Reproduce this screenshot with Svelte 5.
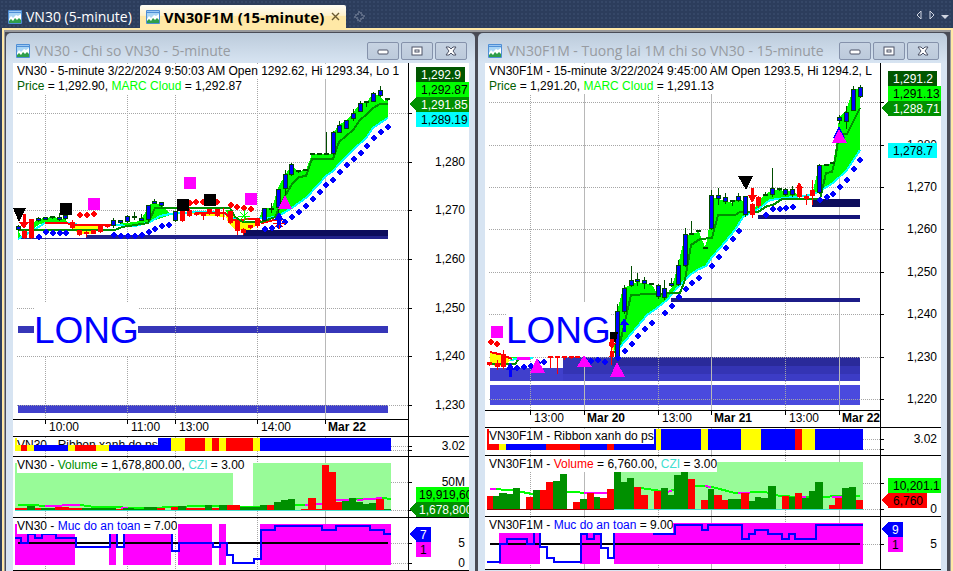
<script>
	const RED = '#ff0000';
	const BLUE = '#0000ff';
	const LIME = '#00ff00';
	const GREEN = '#009000';
	const YELLOW = '#ffff00';
	const PINK = '#ff00ff';
	const DARK = '#004c00';

	// candle: [x, high, low, top, bottom]
	const vn30 = {
		title: 'VN30 - Chi so VN30 - 5-minute',
		symbol: 'VN30',
		head: '5-minute 3/22/2024 9:50:03 AM Open 1292.62, Hi 1293.34, Lo 1',
		price: '1,292.90',
		cloud: '1,292.87',
		x: 13,
		end: 388,
		axis: 409,
		main: { top: 63, h: 373, base: 419 },
		rows: [[113, ''], [162, '1,280'], [210, '1,270'], [259, '1,260'], [308, '1,250'], [356, '1,240'], [405, '1,230']],
		cols: [[45, '10:00'], [127, '11:00'], [175, '13:00'], [257, '14:00'], [325, 'Mar 22', true]],
		zones: [[18, 326, 7, '#3636b8'], [18, 405, 8, '#4040cc']],
		supports: [[18, 238, 1, '#2a2a90'], [86, 235, 4, '#22228a'], [243, 230, 6, '#0d0d5c']],
		clouds: [
			[LIME, '18,230 22,238 18,239'],
			[LIME, '30,226 38,219 52,217 60,218 66,220 68,223 40,224 31,230'],
			[YELLOW, '72,225 98,225 98,230 90,234 78,234 72,228'],
			[LIME, '113,224 127,223 140,221 145,213 148,205 154,203 162,205 171,215 155,220 140,226 113,226'],
			[YELLOW, '189,213 225,213 225,217 200,215'],
			[LIME, '226,210 233,211 236,220 228,216'],
			[YELLOW, '225,214 232,215 240,222 258,221 258,224 250,230 235,230 228,222'],
			[LIME, '260,216 263,208 272,208 278,188 285,175 292,165 295,169 298,171 306,170 312,154 332,154 333,133 339,125 347,120 353,113 360,103 367,102 373,93 380,96 384,101 388,99 388,118 380,123 373,128 366,138 353,150 340,163 333,171 326,176 318,185 307,197 292,208 280,215 270,218 259,218']
		],
		lines: [
			['#00ffff', '18,239 32,231 45,223 66,223 80,225 110,225 135,226 150,222 160,216 170,214 197,212 217,212 225,214 240,222'],
			['#00ffff', '259,218 270,218 280,215 292,208 307,197 318,185 326,176 333,171 340,163 353,150 366,138 373,128 380,123 388,118'],
			[RED, '45,223 66,223 75,225 112,225'],
			[RED, '195,213 225,213 231,220 258,219 262,223 278,219'],
			[GREEN, '18,230 115,230 122,227 148,223 155,208 230,208 235,217 243,222 262,222 275,217 285,196 292,184 299,177 306,176 312,159 333,159 339,142 353,130 360,120 367,114 373,108 380,104 388,104']
		],
		up: [[18, 225, 231, 227, 230], [38, 217, 222, 219, 221], [45, 217, 220, 218, 220], [52, 216, 219, 217, 218], [59, 213, 221, 218, 220], [65, 213, 220, 216, 219], [113, 218, 228, 221, 226], [120, 220, 224, 221, 223], [127, 215, 223, 217, 222], [134, 212, 220, 217, 218], [141, 214, 221, 219, 221], [148, 205, 222, 206, 220], [154, 199, 204, 202, 204], [161, 203, 207, 203, 206], [175, 211, 222, 212, 221], [264, 208, 221, 209, 221], [271, 203, 213, 209, 210], [278, 189, 217, 190, 208], [285, 170, 195, 175, 189], [291, 163, 176, 165, 175], [298, 170, 173, 171, 172], [305, 170, 171, 170, 171], [312, 154, 155, 154, 155], [319, 154, 155, 154, 155], [326, 132, 154, 154, 155], [333, 131, 155, 133, 154], [339, 121, 133, 126, 133], [346, 120, 129, 121, 129], [353, 109, 121, 114, 119], [360, 101, 112, 104, 112], [366, 102, 107, 102, 103], [373, 92, 102, 94, 102], [380, 86, 97, 91, 96], [387, 99, 101, 99, 100]],
		down: [[24, 230, 239, 232, 238], [31, 219, 239, 220, 238], [72, 220, 229, 223, 228], [79, 230, 236, 231, 235], [86, 231, 237, 233, 234], [93, 230, 234, 231, 234], [100, 225, 233, 226, 232], [107, 224, 228, 225, 227], [182, 211, 222, 212, 221], [189, 208, 217, 211, 216], [196, 213, 216, 214, 215], [203, 213, 220, 215, 216], [209, 209, 215, 210, 214], [217, 209, 217, 210, 216], [223, 208, 220, 213, 214], [230, 211, 224, 212, 223], [237, 221, 235, 222, 231], [243, 228, 235, 230, 233], [250, 225, 229, 226, 228], [257, 218, 228, 219, 226]],
		dots: [[39, 237], [46, 232], [53, 233], [60, 233], [66, 233], [114, 235], [121, 236], [128, 236], [135, 236], [142, 235], [149, 232], [155, 229], [162, 226], [169, 225], [265, 229], [272, 228], [279, 226], [285, 222], [292, 217], [299, 212], [306, 206], [313, 199], [320, 192], [326, 185], [333, 180], [340, 172], [347, 165], [354, 159], [361, 153], [367, 146], [374, 138], [381, 132], [388, 127]],
		redDots: [[80, 215], [87, 215], [94, 214], [190, 203], [196, 202], [203, 202], [217, 202], [231, 205], [237, 207], [244, 208], [251, 209]],
		squares: [[60, 203, '#000'], [177, 199, '#000'], [204, 194, '#000'], [88, 198, PINK], [184, 177, PINK], [245, 193, PINK]],
		long: { x: 34, y: 302 },
		shapes: [
			['#000', 'M13 208H26L19 222Z'],
			[RED, 'M23 214H26V222H29L24 229L19 222H23Z'],
			[BLUE, 'M279 212L284 220H281V225H277V220H274Z'],
			[PINK, 'M285 195L292 209H278Z']
		],
		stars: [[244, 216, LIME], [279, 223, RED]],
		badges: [[67, 49, '#005600', '#fff', '1,292.9'], [82, 53, LIME, '#000', '1,292.87'], [97, 53, '#009000', '#fff', '1,291.85', true], [112, 53, '#00ffff', '#000', '1,289.19']],
		ribbon: {
			top: 437, h: 19, y: 438, bh: 13, clip: true, ticks: [446, 450], label: 445,
			stops: [[15, YELLOW], [21, RED], [27, YELLOW], [34, BLUE], [68, YELLOW], [75, RED], [96, YELLOW], [109, BLUE], [171, YELLOW], [185, RED], [205, YELLOW], [212, RED], [219, YELLOW], [226, RED], [253, YELLOW], [260, BLUE], [391, '']]
		},
		volume: {
			top: 457, h: 60, floor: 511, value: '1,678,800.00', color: GREEN,
			fields: [[15, 233], [253, 391]], rim: [[15, 391, '#40e0d0']],
			bars: [[15, 27, 508, 0], [27, 35, 506, 1], [35, 41, 508, 0], [41, 55, 508, 1], [55, 69, 507, 0], [69, 82, 508, 0], [82, 116, 508, 1], [116, 123, 509, 0], [123, 134, 508, 1], [134, 144, 509, 1], [144, 157, 507, 1], [157, 165, 508, 0], [171, 178, 507, 0], [178, 186, 506, 1], [186, 205, 508, 0], [205, 212, 505, 1], [212, 219, 508, 0], [219, 227, 505, 1], [227, 240, 505, 0], [240, 260, 507, 1], [260, 267, 505, 1], [267, 274, 505, 0], [274, 281, 502, 1], [281, 288, 500, 1], [288, 295, 499, 1], [301, 308, 509, 0], [308, 316, 498, 0], [316, 322, 509, 0], [322, 329, 465, 0], [329, 336, 472, 0], [336, 342, 502, 0], [342, 349, 501, 1], [349, 356, 498, 1], [356, 363, 502, 1], [363, 369, 504, 1], [369, 376, 503, 1], [376, 384, 499, 0], [384, 391, 509, 1]],
			lines: [[LIME, '18,505 32,505 45,506 80,505 95,507 150,508 200,506 250,507 300,505 322,504 336,500 370,499 382,498 391,499'], [PINK, '45,506 80,505'], [PINK, '121,508 128,508'], [PINK, '305,505 322,504'], [PINK, '336,500 349,500'], [PINK, '357,500 382,498']],
			ticks: [[482, '50M'], [510, '']],
			badges: [[487, 53, LIME, '#000', '19,919,600'], [502, 53, '#009000', '#fff', '1,678,800', true]], inset: 3
		},
		safety: {
			top: 518, h: 52, y: 524, mid: 543, value: '7.00',
			blocks: [[15, 75], [109, 116], [123, 171], [178, 212], [219, 226], [260, 391]],
			path: '15,538 21,538 21,543 28,543 28,534 35,534 35,538 42,538 42,534 56,534 56,538 76,538 76,547 110,547 110,532 117,532 117,547 124,547 124,532 172,532 172,551 179,551 179,543 213,543 213,547 220,547 220,543 227,543 227,555 233,555 233,563 254,563 254,559 261,559 261,530 275,530 275,526 322,526 322,530 336,530 336,526 370,526 370,530 384,530 384,534 391,534',
			ticks: [[543, '5'], [563, '0']],
			badges: [[527, 15, BLUE, '#fff', '7', true], [542, 15, PINK, '#000', '1']]
		}
	};

	const vn30f = {
		title: 'VN30F1M - Tuong lai 1M chi so VN30 - 15-minute',
		symbol: 'VN30F1M',
		head: '15-minute 3/22/2024 9:45:00 AM Open 1293.5, Hi 1294.2, L',
		price: '1,291.20',
		cloud: '1,291.13',
		x: 485,
		end: 860,
		axis: 881,
		main: { top: 63, h: 364, base: 410 },
		rows: [[102, ''], [145, '1,280'], [187, '1,270'], [229, '1,260'], [272, '1,250'], [314, '1,240'], [357, '1,230'], [399, '1,220']],
		cols: [[530, '13:00'], [584, 'Mar 20', true], [658, '13:00'], [711, 'Mar 21', true], [785, '13:00'], [839, 'Mar 22', true]],
		zones: [[490, 368, 13, '#4040cc'], [563, 357, 18, '#3434b4'], [563, 374, 7, '#3c3cc6'], [612, 357, 9, '#2a2a9a'], [490, 385, 20, '#4a4ade']],
		supports: [[671, 298, 4, '#1c1c88'], [758, 215, 4, '#14147a'], [812, 199, 8, '#0d0d5c']],
		clouds: [
			[YELLOW, '490,353 504,356 510,360 504,366 494,366 490,362'],
			[LIME, '507,357 520,357 518,360 514,358'],
			[YELLOW, '611,350 616,344 618,352'],
			[LIME, '614,352 617,312 623,288 631,285 637,282 652,285 657,293 667,294 672,287 678,265 685,235 692,234 699,232 705,247 708,237 711,197 725,201 733,203 738,197 744,203 747,215 743,217 735,230 720,248 712,257 706,266 697,270 690,275 678,287 667,300 657,308 647,315 637,327 620,347'],
			[LIME, '747,214 755,208 762,197 772,190 792,191 800,196 812,197 783,198 772,200 758,210'],
			[LIME, '812,195 819,165 833,164 837,140 839,118 846,110 853,90 860,88 860,150 847,170 833,183 820,191']
		],
		lines: [
			['#00ffff', '510,360 517,359 533,358'],
			['#00ffff', '614,352 620,347 637,327 647,315 657,308 667,300 678,287 690,275 697,270 706,266 712,257 720,248 735,230 743,217 750,213 760,208 770,200 785,198 812,195 820,191 833,183 847,170 860,150'],
			[RED, '490,352 503,355 512,359'],
			[GREEN, '488,364 515,364 518,360'],
			[GREEN, '610,352 618,352 623,330 631,295 650,294 680,293 685,280 691,245 700,239 712,238 718,215 735,215 740,212 758,212 767,206 773,205 782,199 820,199 826,173 832,172 835,160 839,135 847,134 860,108']
		],
		up: [[617, 304, 358, 312, 357], [624, 285, 314, 289, 312], [631, 266, 287, 281, 286], [637, 273, 286, 280, 282], [644, 277, 289, 281, 284], [651, 284, 285, 284, 285], [658, 284, 299, 286, 297], [664, 280, 300, 289, 298], [671, 278, 287, 284, 286], [678, 260, 286, 266, 285], [685, 228, 267, 235, 266], [691, 221, 235, 234, 235], [698, 231, 232, 231, 232], [705, 248, 249, 248, 249], [711, 190, 230, 196, 229], [718, 188, 205, 196, 199], [725, 193, 204, 198, 202], [732, 200, 206, 201, 202], [738, 193, 202, 197, 201], [745, 197, 217, 197, 215], [765, 192, 196, 195, 196], [772, 168, 197, 189, 195], [779, 188, 191, 189, 190], [785, 188, 196, 190, 195], [792, 186, 197, 190, 195], [819, 164, 194, 166, 193], [826, 165, 166, 165, 166], [832, 163, 164, 163, 164], [839, 115, 124, 118, 121], [846, 106, 129, 113, 122], [853, 86, 111, 90, 111], [860, 85, 98, 88, 97]],
		down: [[489, 362, 366, 363, 365], [497, 360, 370, 364, 367], [503, 350, 369, 355, 367], [550, 356, 368, 357, 358], [557, 356, 374, 357, 358], [564, 356, 360, 357, 358], [571, 356, 359, 357, 358], [577, 356, 358, 357, 358], [611, 339, 365, 352, 357], [752, 203, 218, 205, 215], [758, 196, 208, 198, 206], [799, 184, 198, 188, 197], [806, 194, 205, 197, 199], [812, 180, 205, 191, 196]],
		dots: [[517, 368], [524, 367], [531, 366], [538, 363], [544, 362], [585, 360], [591, 361], [598, 360], [605, 362], [618, 358], [625, 351], [632, 344], [638, 336], [645, 329], [652, 323], [665, 313], [672, 306], [679, 297], [686, 289], [692, 283], [699, 278], [712, 266], [719, 257], [726, 248], [733, 239], [739, 231], [766, 215], [773, 209], [780, 209], [786, 208], [793, 207], [820, 200], [827, 197], [833, 194], [840, 187], [847, 180], [854, 169], [860, 160]],
		redDots: [[491, 342], [497, 344]],
		squares: [[491, 326, PINK]],
		long: { x: 506, y: 302 },
		shapes: [
			[PINK, 'M517 357H530V360H517Z'],
			['#000', 'M610 332H618L616 342H610Z'],
			[RED, 'M610 339H614V343H616L612 349L609 345Z'],
			['#000', 'M738 176H753L746 190Z'],
			[RED, 'M751 188H754V195H757L752 203L748 195H751Z'],
			[RED, 'M799 182L803 188H796Z'],
			[BLUE, 'M510 362L515 370H512V377H509V370H506Z'],
			[BLUE, 'M624 318L629 325H626V332H623V325H620Z'],
			[PINK, 'M537 358L545 373H530Z'],
			[PINK, 'M584 355L592 367H577Z'],
			[PINK, 'M617 362L625 377H610Z'],
			[BLUE, 'M839 126L845 138H833Z'],
			[PINK, 'M839 129L847 143H832Z']
		],
		stars: [],
		badges: [[71, 49, '#005600', '#fff', '1,291.2'], [86, 53, LIME, '#000', '1,291.13'], [101, 53, '#009000', '#fff', '1,288.71', true], [143, 49, '#00ffff', '#000', '1,278.7']],
		ribbon: {
			top: 428, h: 27, y: 429, bh: 21, clip: false, ticks: [439, 449], label: 438,
			stops: [[487, RED], [499, YELLOW], [506, BLUE], [546, RED], [580, BLUE], [607, RED], [614, BLUE], [656, YELLOW], [661, BLUE], [701, YELLOW], [708, BLUE], [741, YELLOW], [761, BLUE], [795, RED], [802, YELLOW], [815, BLUE], [863, '']]
		},
		volume: {
			top: 456, h: 60, floor: 510, value: '6,760.00', color: RED,
			fields: [[614, 863]], rim: [[487, 614, '#900000'], [614, 863, '#40e0d0']],
			bars: [[487, 493, 496, 0], [493, 499, 496, 1], [499, 507, 493, 1], [507, 513, 494, 1], [513, 520, 488, 1], [526, 533, 497, 0], [533, 540, 490, 1], [540, 546, 490, 0], [546, 553, 482, 0], [553, 560, 481, 1], [560, 567, 474, 1], [573, 580, 502, 0], [580, 587, 499, 1], [587, 594, 493, 0], [594, 600, 497, 1], [600, 607, 498, 0], [607, 614, 489, 0], [614, 621, 472, 1], [621, 627, 482, 1], [627, 634, 478, 1], [634, 641, 487, 0], [641, 648, 495, 0], [654, 661, 491, 0], [661, 668, 488, 1], [668, 674, 495, 1], [674, 681, 475, 1], [681, 688, 472, 1], [688, 695, 479, 0], [701, 708, 500, 0], [708, 714, 489, 1], [714, 722, 495, 0], [722, 728, 500, 0], [728, 741, 499, 1], [741, 749, 493, 0], [749, 755, 501, 1], [755, 761, 497, 1], [761, 768, 498, 1], [768, 776, 486, 1], [782, 789, 496, 0], [789, 795, 497, 1], [795, 802, 493, 0], [802, 809, 498, 1], [809, 815, 491, 1], [815, 823, 482, 1], [829, 835, 505, 0], [835, 842, 498, 0], [842, 849, 488, 1], [849, 856, 487, 1], [856, 863, 500, 0]],
			lines: [[LIME, '490,489 512,490 532,494 570,492 590,493 610,493 640,488 655,490 668,492 680,487 700,486 712,487 735,493 765,492 780,496 800,497 860,496'], [PINK, '490,489 496,489'], [PINK, '584,493 607,493'], [PINK, '666,492 672,491'], [PINK, '705,486 711,487'], [PINK, '738,493 750,493'], [PINK, '802,497 806,497'], [PINK, '832,497 842,497']],
			ticks: [[483, ''], [509, '0']],
			badges: [[478, 53, LIME, '#000', '10,201.1'], [493, 39, RED, '#000', '6,760', true]], inset: 5
		},
		safety: {
			top: 517, h: 52, y: 523, mid: 544, value: '9.00',
			blocks: [[499, 540], [580, 600], [614, 863]],
			path: '487,562 500,562 500,544 507,544 507,539 527,539 527,544 534,544 534,530 540,530 540,547 547,547 547,558 554,558 554,562 581,562 581,534 587,534 587,539 594,539 594,534 601,534 601,548 608,548 608,558 614,558 614,530 654,530 654,534 675,534 675,525 702,525 702,530 708,530 708,525 742,525 742,539 749,539 749,534 755,534 755,530 768,530 768,534 782,534 782,539 789,539 789,534 795,534 795,539 816,539 816,525 863,525',
			ticks: [[544, '5']],
			badges: [[522, 15, BLUE, '#fff', '9', true], [537, 15, PINK, '#000', '1']]
		}
	};

	const windows = [vn30, vn30f];
	let active = $state(1);
</script>

{#snippet chartIcon()}
	<svg class="ico" viewBox="0 0 14 14" aria-hidden="true">
		<rect width="14" height="14" rx="1" fill="#4f8fd6" />
		<rect x="1" y="3" width="12" height="10" fill="#a9d5f5" />
		<path d="M1 1H13V2H1Z" fill="#9cc8f2" />
		<path d="M1 9L3 6L5 8L8 5L10 6L13 4V11H1Z" fill="#fff" />
		<path d="M1 11L3 9L5 11L7 8L9 10L11 8L13 10V13H1Z" fill="#2f9e4a" />
	</svg>
{/snippet}

{#snippet badgeList(list, ax, inset)}
	{#each list as [y, w, bg, fg, text, arrow]}
		{#if arrow}<path d="M{ax} {y + 7}L{ax + 8} {y}V{y + 15}Z" fill={bg} />{/if}
		<rect x={ax + 7} {y} width={w} height="15" fill={bg} />
		<text x={ax + 7 + inset} y={y + 12} fill={fg}>{text}</text>
	{/each}
{/snippet}

{#snippet gridCols(c, y1, y2)}
	{#each c.cols as [x, , solid]}
		<path class="grid" class:solid d="M{x + 0.5} {y1}V{y2}" />
	{/each}
{/snippet}

{#snippet candles(list, stroke, fill)}
	{#each list as [x, hi, lo, top, bottom]}
		<rect {x} y={hi} width="1" height={lo - hi} fill={stroke} />
		<rect x={x - 2} y={top - 1} width="5" height={bottom - top + 1} fill={stroke} />
		{#if bottom - top > 1}
			<rect x={x - 1} y={top} width="3" height={bottom - top - 1} {fill} />
		{/if}
	{/each}
{/snippet}

{#snippet trail(list, fill)}
	{#each list as [x, y]}
		<path d="M{x - 1} {y - 3}h2v1h1v1h1v2h-1v1h-1v1h-2v-1h-1v-1h-1v-2h1v-1h1Z" {fill} />
	{/each}
{/snippet}

<div class="app">
	<nav class="tabs">
		<button class="tab" class:active={active === 0} onclick={() => (active = 0)}>
			{@render chartIcon()}VN30 (5-minute)
		</button>
		<button class="tab" class:active={active === 1} onclick={() => (active = 1)}>
			{@render chartIcon()}VN30F1M (15-minute)
			<svg class="close" viewBox="0 0 9 9" aria-hidden="true"><path d="M1 1L8 8M8 1L1 8" /></svg>
		</button>
		<button class="add" aria-label="New tab">
			<svg viewBox="0 0 11 11"><path d="M4 1H7V4H10V7H7V10H4V7H1V4H4Z" /></svg>
		</button>
		<div class="nav-btns">
			<button aria-label="Previous"><svg viewBox="0 0 8 10"><path d="M6 1V9L2 5Z" /></svg></button>
			<button aria-label="Next"><svg viewBox="0 0 8 10"><path d="M2 1V9L6 5Z" /></svg></button>
			<button aria-label="List tabs"><svg viewBox="0 0 8 10"><path class="full" d="M0 5H8L4 9Z" /></svg></button>
		</div>
	</nav>

	<main>
		{#each windows as c}
			<section class="win">
				<header>
					{@render chartIcon()}
					<h2>{c.title}</h2>
					<button aria-label="Minimize"><svg viewBox="0 0 12 10"><rect x="1" y="4" width="10" height="4" rx="1" /></svg></button>
					<button aria-label="Maximize"><svg viewBox="0 0 12 10"><rect x="1" y="1" width="10" height="8" /><rect x="4" y="4" width="4" height="2" /></svg></button>
					<button aria-label="Close"><svg viewBox="0 0 12 10"><path d="M1 1H4L6 3L8 1H11L8 5L11 9H8L6 7L4 9H1L4 5Z" /></svg></button>
				</header>

				<div class="chart">
					<div class="pane">
						<svg class="plot" height={c.main.h}>
							<g transform="translate({-c.x} {-c.main.top})">
								{#each c.zones as [x, y, h, fill]}
									<rect {x} {y} width={c.end - x} height={h} {fill} />
								{/each}
								{@render gridCols(c, 63, c.main.base)}
								{#each c.rows as [y]}
									<path class="grid" d="M{c.x + 4} {y + 0.5}H{c.axis}" />
								{/each}
								{#each c.supports as [x, y, h, fill]}
									<rect {x} {y} width={c.end - x} height={h} {fill} />
								{/each}
								{#each c.clouds as [fill, points]}
									<polygon {points} {fill} />
								{/each}
								{#each c.lines as [stroke, points]}
									<polyline {points} {stroke} />
								{/each}
								{@render candles(c.up, DARK, BLUE)}
								{@render candles(c.down, RED, RED)}
								<rect x={c.long.x} y={c.long.y} width="104" height="54" fill="#fff" />
								<text class="long" x={c.long.x} y={c.long.y + 41}>LONG</text>
								{@render trail(c.dots, BLUE)}
								{@render trail(c.redDots, RED)}
								{#each c.squares as [x, y, fill]}
									<rect {x} {y} width="12" height="12" {fill} />
								{/each}
								{#each c.stars as [x, y, stroke]}
									<path class="star" d="M{x - 6} {y}h12M{x} {y - 6}v12M{x - 4} {y - 4}l8 8M{x + 4} {y - 4}l-8 8" {stroke} />
								{/each}
								{#each c.shapes as [fill, d]}
									<path {d} {fill} />
								{/each}
								<rect x={c.x} y={c.main.base} width="396" height="1" />
								{#each c.cols as [x, label, day]}
									<rect {x} y={c.main.base} width="1" height="5" />
									<text class:day x={x + (day ? 3 : 4)} y={c.main.base + 12}>{label}</text>
								{/each}
							</g>
						</svg>
						<svg class="axis" height={c.main.h}>
							<g transform="translate({-c.axis} {-c.main.top})">
								{#each c.rows as [y, label]}
									<rect x={c.axis} {y} width="3" height="1" />
									<text class="num" x={c.axis + 56} y={y + 4}>{label}</text>
								{/each}
								{@render badgeList(c.badges, c.axis, 5)}
							</g>
						</svg>
						<div class="legend">
							<div>{c.symbol} - {c.head}</div>
							<div><span style:color="#006000">Price</span> = {c.price}, <span style:color={LIME}>MARC Cloud</span> = {c.cloud}</div>
						</div>
					</div>

					<div class="pane">
						<svg class="plot" height={c.ribbon.h}>
							<g transform="translate({-c.x} {-c.ribbon.top})">
								{@render gridCols(c, c.ribbon.top, c.ribbon.top + c.ribbon.h)}
								{#each c.ribbon.ticks as y}
									<path class="grid" d="M{c.end + 3} {y + 0.5}H{c.axis}" />
								{/each}
								{#each c.ribbon.stops.slice(0, -1) as [x, fill], i}
									<rect {x} y={c.ribbon.y} width={c.ribbon.stops[i + 1][0] - x} height={c.ribbon.bh} {fill} />
								{/each}
							</g>
						</svg>
						<svg class="axis" height={c.ribbon.h}>
							<g transform="translate({-c.axis} {-c.ribbon.top})">
								{#each c.ribbon.ticks as y}
									<rect x={c.axis} {y} width="3" height="1" />
								{/each}
								<text class="num" x={c.axis + 56} y={c.ribbon.label + 5}>3.02</text>
							</g>
						</svg>
						<div class="legend" class:clip={c.ribbon.clip}>{c.symbol} - Ribbon xanh do ps</div>
					</div>

					<div class="pane">
						<svg class="plot" height={c.volume.h}>
							<g transform="translate({-c.x} {-c.volume.top})">
								{@render gridCols(c, c.volume.top, c.volume.top + c.volume.h)}
								{#each c.volume.ticks as [y]}
									<path class="grid" d="M{c.end + 3} {y + 0.5}H{c.axis}" />
								{/each}
								{#each c.volume.fields as [a, b]}
									<rect x={a} y={c.volume.floor - 48} width={b - a} height="48" fill="#98fb98" />
								{/each}
								{#each c.volume.lines as [stroke, points]}
									<polyline {points} {stroke} />
								{/each}
								{#each c.volume.bars as [a, b, y, rising]}
									<rect x={a} {y} width={b - a} height={c.volume.floor - y} fill={rising ? GREEN : RED} />
								{/each}
								{#each c.volume.rim as [a, b, fill]}
									<rect x={a} y={c.volume.floor - 1} width={b - a} height="1" {fill} />
								{/each}
							</g>
						</svg>
						<svg class="axis" height={c.volume.h}>
							<g transform="translate({-c.axis} {-c.volume.top})">
								{#each c.volume.ticks as [y, label]}
									<rect x={c.axis} {y} width="3" height="1" />
									<text class="num" x={c.axis + 56} y={y + 4}>{label}</text>
								{/each}
								{@render badgeList(c.volume.badges, c.axis, c.volume.inset)}
							</g>
						</svg>
						<div class="legend">
							{c.symbol} - <span style:color={c.volume.color}>Volume</span> = {c.volume.value}, <span style:color="#40e0d0">CZI</span> = 3.00
						</div>
					</div>

					<div class="pane">
						<svg class="plot" height={c.safety.h}>
							<g transform="translate({-c.x} {-c.safety.top})">
								{@render gridCols(c, c.safety.top, c.safety.top + c.safety.h)}
								{#each c.safety.ticks as [y]}
									<path class="grid" d="M{c.end + 3} {y + 0.5}H{c.axis}" />
								{/each}
								{#each c.safety.blocks as [a, b]}
									<rect x={a} y={c.safety.y} width={b - a} height="41" fill={PINK} />
								{/each}
								<rect x={c.x + 5} y={c.safety.mid - 1} width="370" height="2" />
								<polyline points={c.safety.path} stroke={BLUE} />
							</g>
						</svg>
						<svg class="axis" height={c.safety.h}>
							<g transform="translate({-c.axis} {-c.safety.top})">
								{#each c.safety.ticks as [y, label]}
									<rect x={c.axis} {y} width="3" height="1" />
									<text class="num" x={c.axis + 56} y={y + 4}>{label}</text>
								{/each}
								{@render badgeList(c.safety.badges, c.axis, 4)}
							</g>
						</svg>
						<div class="legend">{c.symbol} - <span style:color={BLUE}>Muc do an toan</span> = {c.safety.value}</div>
					</div>
				</div>
			</section>
		{/each}
	</main>
</div>

<style>
	:global(body) { margin: 0; overflow: hidden; }

	.app {
		display: flex; flex-direction: column;
		min-height: 100vh;
		background: #2c3d5c;
		font-family: 'Open Sans', 'Noto Sans', sans-serif;
	}
	button { padding: 0; border: 0; background: none; font: inherit; color: inherit; cursor: pointer; }
	.ico { flex: none; width: 14px; height: 14px; }

	.tabs {
		display: flex; align-items: flex-end;
		height: 28px; padding-left: 2px;
		background: #2c3d5c radial-gradient(#354767 1px, transparent 1px) 0 0 / 4px 4px;
	}
	.tab {
		display: flex; align-items: center; gap: 4px;
		height: 23px; padding: 0 8px 0 6px;
		color: #fff; font-size: 14px; white-space: nowrap;
	}
	.tab.active {
		padding-right: 6px;
		background: linear-gradient(#fffdf4, #fff2cc 45%, #ffe8a6 50%);
		border-radius: 2px 2px 0 0;
		color: #000; font-size: 15px; font-weight: 700;
	}
	.close { width: 9px; height: 9px; margin-left: 3px; stroke: #6b5a30; stroke-width: 1.4; }
	.add { display: grid; place-items: center; width: 26px; height: 24px; }
	.add svg { width: 11px; height: 11px; fill: none; stroke: #8793a8; stroke-dasharray: 2 1; }
	.nav-btns { display: flex; gap: 5px; margin-left: auto; padding: 0 4px 8px 0; }
	.nav-btns button { display: flex; }
	.nav-btns svg { width: 8px; height: 10px; fill: none; stroke: #ced4e0; }
	.nav-btns .full { fill: #ced4e0; stroke: none; }

	main {
		flex: 1;
		display: grid; grid-template-columns: 1fr 1fr; gap: 3px;
		margin-left: 2px; padding: 3px 4px 0 2px;
		border: solid #ffe8a6; border-width: 2px 2px 0;
		background: #4a4c56;
		box-shadow: inset 0 2px #98999c, inset 1px 0 #98999c, inset -1px 0 #98999c;
	}
	.win {
		min-width: 0;
		padding: 0 6px 0 7px;
		border-radius: 5px 5px 0 0;
		background: linear-gradient(#bccbdb, #d7e4f2 30px);
	}
	.win header {
		display: flex; align-items: center; gap: 2px;
		height: 30px; padding: 5px 2px 0 3px;
		box-sizing: border-box;
	}
	h2 {
		flex: 1; min-width: 0; margin: 0 0 0 3px;
		overflow: hidden;
		color: #979ba1; font-size: 14px; font-weight: 400; line-height: 20px; white-space: nowrap;
	}
	.win header button {
		display: grid; place-items: center; flex: none;
		box-sizing: border-box; width: 32px; height: 18px;
		border: 1px solid #8592ab; border-radius: 2px;
		background: linear-gradient(#c7d3e2, #bccadb);
	}
	.win header button svg { width: 12px; height: 10px; fill: #fff; stroke: #4d5366; }

	.chart { background: #fff; font: 12px/15px 'Liberation Sans', Arial, sans-serif; color: #000; }
	.pane { position: relative; display: flex; overflow: hidden; border-bottom: 1px solid #000; }
	.plot { flex: 1; min-width: 0; display: block; shape-rendering: crispEdges; }
	.axis { flex: none; width: 60px; display: block; border-left: 1px solid #000; shape-rendering: crispEdges; }
	.legend {
		position: absolute; top: 1px; left: 4px;
		overflow: hidden;
		white-space: nowrap;
	}
	.legend, .legend div { background: #fff; }
	.legend:has(div) { background: none; }
	.legend div { width: max-content; }
	.legend.clip { height: 7px; }

	.grid { fill: none; stroke: #a6a6a6; stroke-dasharray: 1 1; }
	.grid.solid { stroke: #b8b8b8; stroke-dasharray: none; }
	polyline { fill: none; stroke-width: 2; }
	.star { fill: none; stroke-width: 1; }
	text.day { font-weight: 700; }
	text.num { text-anchor: end; }
	text.long { fill: #00f; font-size: 37px; }
</style>
